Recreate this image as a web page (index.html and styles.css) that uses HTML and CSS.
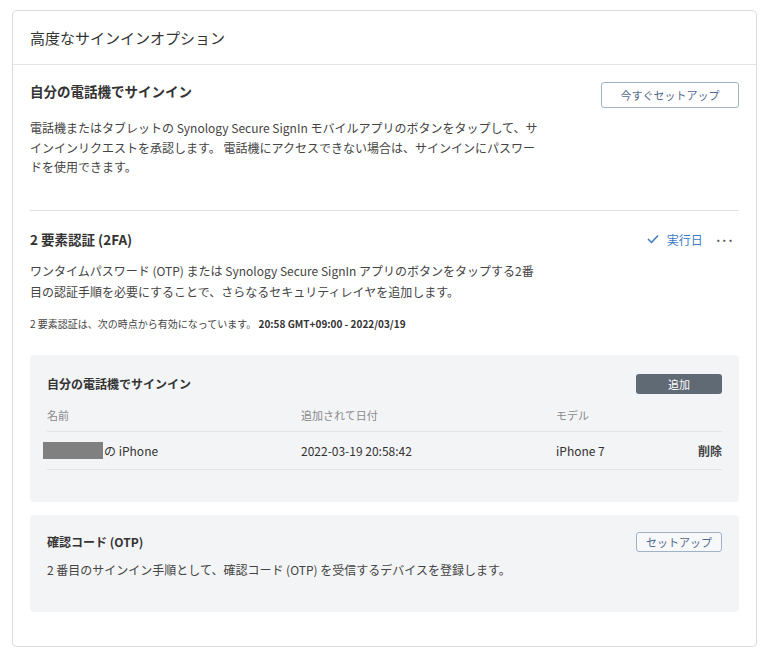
FILE: index.html
```html
<!DOCTYPE html>
<html lang="ja">
<head>
    <meta charset="UTF-8">
    <meta name="viewport" content="width=device-width, initial-scale=1.0">
    <title>高度なサインインオプション</title>
    <link rel="stylesheet" href="styles.css">
</head>
<body>

    <div class="card">
        <div class="card-header">高度なサインインオプション</div>

        <div class="section section-first">
            <div class="section-row">
                <div class="section-title">自分の電話機でサインイン</div>
                <button class="btn-outline btn-wide">今すぐセットアップ</button>
            </div>
            <p class="section-text">電話機またはタブレットの Synology Secure SignIn モバイルアプリのボタンをタップして、サインインリクエストを承認します。 電話機にアクセスできない場合は、サインインにパスワードを使用できます。</p>
        </div>

        <div class="section">
            <div class="section-row">
                <div class="section-title">2 要素認証 (2FA)</div>
                <div class="status">
                    <svg class="check" width="12" height="10" viewBox="0 0 12 10">
                        <polyline points="1,5 4.5,8.5 11,1.5" fill="none" stroke="#3a79c6" stroke-width="1.5"></polyline>
                    </svg>
                    <span class="status-text">実行日</span>
                    <span class="more">&middot;&middot;&middot;</span>
                </div>
            </div>
            <p class="section-text text-2fa">ワンタイムパスワード (OTP) または Synology Secure SignIn アプリのボタンをタップする2番目の認証手順を必要にすることで、さらなるセキュリティレイヤを追加します。</p>
            <p class="note">2 要素認証は、次の時点から有効になっています。 <b>20:58 GMT+09:00 - 2022/03/19</b></p>

            <div class="panel panel-devices">
                <div class="panel-row">
                    <div class="panel-title">自分の電話機でサインイン</div>
                    <button class="btn-dark">追加</button>
                </div>
                <div class="device-table">
                    <div class="cell head">名前</div>
                    <div class="cell head">追加されて日付</div>
                    <div class="cell head">モデル</div>
                    <div class="cell head"></div>

                    <div class="cell"><span class="masked"></span>の iPhone</div>
                    <div class="cell">2022-03-19 20:58:42</div>
                    <div class="cell">iPhone 7</div>
                    <div class="cell delete">削除</div>
                </div>
            </div>

            <div class="panel panel-otp">
                <div class="panel-row">
                    <div class="panel-title">確認コード (OTP)</div>
                    <button class="btn-outline btn-small">セットアップ</button>
                </div>
                <p class="panel-text">2 番目のサインイン手順として、確認コード (OTP) を受信するデバイスを登録します。</p>
            </div>
        </div>
    </div>

</body>
</html>
```

FILE: styles.css
```css
body {
    font-family: "Noto Sans CJK JP", "Noto Sans", sans-serif;
    margin: 0;
    padding: 10px 11px 0 12px;
    background-color: #ffffff;
    color: #3a3a3a;
}

.card {
    height: 637px;
    box-sizing: border-box;
    border: 1px solid #dcdcdc;
    border-radius: 5px;
    box-shadow: 0 1px 2px rgba(0, 0, 0, 0.06);
}

.card-header {
    height: 53px;
    padding: 0 17px;
    display: flex;
    align-items: center;
    font-size: 15px;
    color: #333333;
    border-bottom: 1px solid #e4e4e4;
}

.section {
    margin: 0 17px;
    padding-top: 19px;
}

.section-first {
    padding-top: 17px;
    padding-bottom: 33px;
    border-bottom: 1px solid #e2e2e2;
}

.section-row {
    display: flex;
    justify-content: space-between;
    align-items: flex-start;
}

.section-title {
    font-size: 13.5px;
    font-weight: bold;
    line-height: 18px;
    color: #333333;
}

.section-text {
    margin: 10px 0 0;
    width: 510px;
    font-size: 12px;
    line-height: 19.5px;
    color: #444444;
}

.text-2fa {
    margin-top: 12px;
    line-height: 21px;
}

.note {
    margin: 14px 0 0;
    font-size: 10px;
    line-height: 16px;
    color: #444444;
}

.note b {
    color: #333333;
}

.btn-outline {
    font-family: inherit;
    background: #ffffff;
    border: 1px solid #9fb2c6;
    border-radius: 3px;
    color: #51698a;
    font-size: 11px;
    padding: 0;
    cursor: pointer;
}

.btn-wide {
    width: 138px;
    height: 26px;
}

.btn-small {
    width: 86px;
    height: 20px;
    background: #f7f8fa;
}

.btn-dark {
    font-family: inherit;
    width: 86px;
    height: 20px;
    padding: 0;
    background: #606a75;
    border: none;
    border-radius: 3px;
    color: #ffffff;
    font-size: 11px;
    cursor: pointer;
}

.status {
    display: flex;
    align-items: center;
    gap: 8px;
    margin-top: 1px;
    margin-right: 6px;
    font-size: 12px;
    color: #3a79c6;
}

.more {
    margin-left: 4px;
    font-size: 12px;
    font-weight: bold;
    letter-spacing: -1px;
    color: #555555;
}

.panel {
    background-color: #f3f4f6;
    border-radius: 4px;
    padding: 19px 17px 0;
}

.panel-devices {
    margin-top: 23px;
    height: 147px;
    box-sizing: border-box;
}

.panel-otp {
    margin-top: 13px;
    height: 97px;
    box-sizing: border-box;
    padding-top: 17px;
}

.panel-row {
    display: flex;
    justify-content: space-between;
    align-items: center;
}

.panel-title {
    font-size: 12px;
    font-weight: bold;
    color: #333333;
}

.panel-text {
    margin: 8px 0 0;
    font-size: 12px;
    line-height: 20px;
    color: #444444;
}

.device-table {
    display: grid;
    grid-template-columns: 254px 255px 1fr auto;
    margin-top: 13px;
}

.cell {
    display: flex;
    align-items: center;
    height: 37px;
    font-size: 12px;
    color: #333333;
    border-bottom: 1px solid #e3e4e7;
}

.cell.head {
    height: 24px;
    align-items: flex-start;
    font-size: 11px;
    color: #8a8a8a;
}

.masked {
    display: inline-block;
    width: 60px;
    height: 17px;
    margin-left: -4px;
    margin-right: 1px;
    background: #808080;
}

.delete {
    font-weight: bold;
    color: #444444;
}
```
